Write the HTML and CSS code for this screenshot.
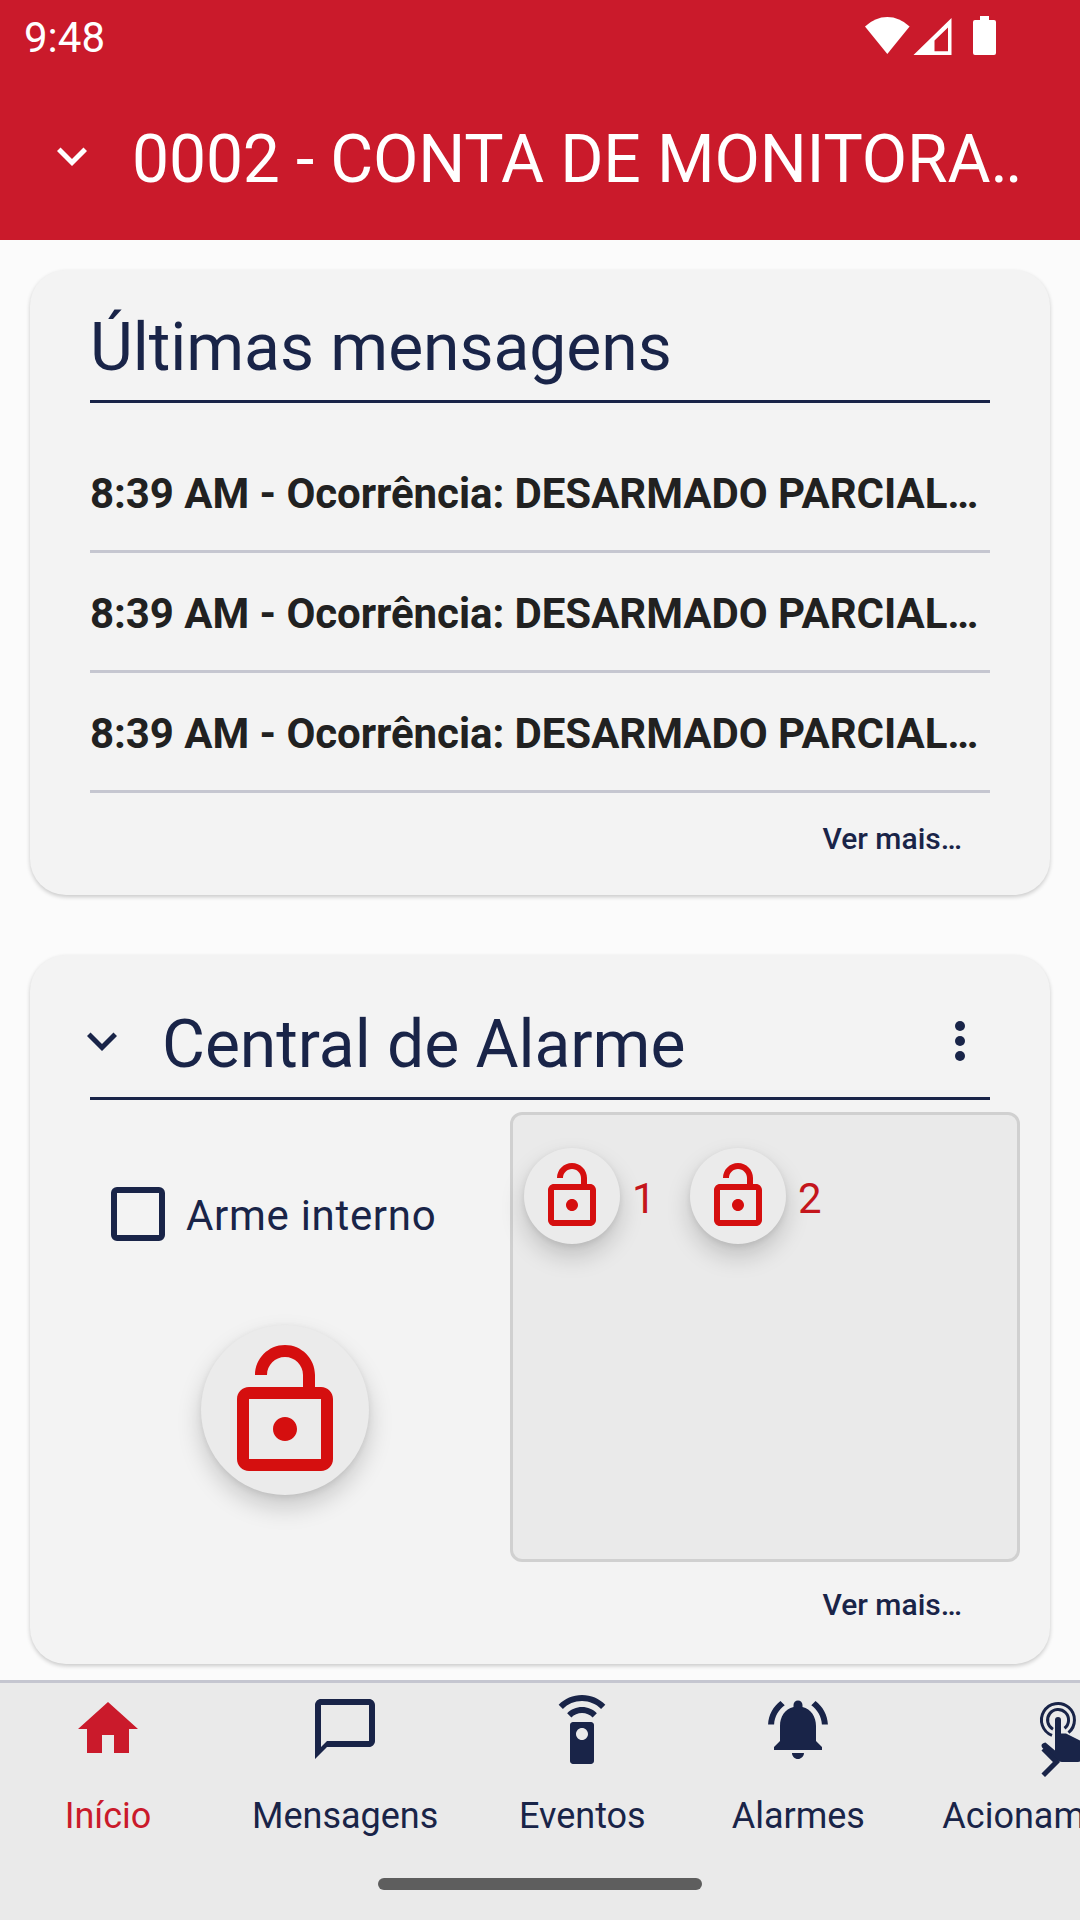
FILE: index.html
```html
<!DOCTYPE html>
<html lang="pt-BR">
<head>
    <meta charset="UTF-8">
    <title>Início</title>
    <link rel="stylesheet" href="styles.css">
</head>
<body>
    <header class="header">
        <div class="status-bar">
            <span class="clock">9:48</span>
            <svg class="status-icons" viewBox="0 0 132 40" fill="currentColor">
                <path d="M0 10.5Q10 1 22.3 1T44.6 10.5L22.3 38Z"/>
                <path fill-rule="evenodd" d="M86.500 2V39H48.500ZM83 11.500L69.500 24.500V35.300H83Z"/>
                <path d="M115 0h9v4h5q2 0 2 2v31q0 2-2 2h-19q-2 0-2-2v-31q0-2 2-2h5z"/>
            </svg>
        </div>
        <div class="toolbar">
            <svg class="icon-sm" viewBox="0 0 24 24" fill="currentColor"><path d="M7.410 8.590L12 13.170l4.590-4.580L18 10l-6 6-6-6z"/></svg>
            <h1 class="title">0002 - CONTA DE MONITORA<span class="dots">..</span></h1>
        </div>
    </header>

    <main class="content">
        <section class="card messages">
            <h2 class="card-title">Últimas mensagens</h2>
            <ul class="message-list">
                <li>8:39 AM - Ocorrência: DESARMADO PARCIAL…</li>
                <li>8:39 AM - Ocorrência: DESARMADO PARCIAL…</li>
                <li>8:39 AM - Ocorrência: DESARMADO PARCIAL…</li>
            </ul>
            <a class="more">Ver mais…</a>
        </section>

        <section class="card alarm">
            <div class="alarm-header">
                <svg class="icon-sm" viewBox="0 0 24 24" fill="currentColor"><path d="M7.410 8.590L12 13.170l4.590-4.580L18 10l-6 6-6-6z"/></svg>
                <h2 class="alarm-title">Central de Alarme</h2>
                <svg class="icon-sm" viewBox="0 0 24 24" fill="currentColor"><circle cx="12" cy="6" r="2"/><circle cx="12" cy="12" r="2"/><circle cx="12" cy="18" r="2"/></svg>
            </div>
            <div class="alarm-body">
                <div class="arm">
                    <label class="check"><span class="box"></span><span class="check-text">Arme interno</span></label>
                    <button class="lock lock-big">
                        <svg viewBox="0 0 24 24" fill="currentColor"><path d="M12 17c1.100 0 2-.9 2-2s-.9-2-2-2-2 .9-2 2 .9 2 2 2zm6-9h-1V6c0-2.760-2.240-5-5-5S7 3.240 7 6h2c0-1.660 1.340-3 3-3s3 1.340 3 3v2H6c-1.100 0-2 .9-2 2v10c0 1.100.9 2 2 2h12c1.100 0 2-.9 2-2V10c0-1.100-.9-2-2-2zm0 12H6V10h12v10z"/></svg>
                    </button>
                </div>
                <div class="zones">
                    <div class="zone">
                        <button class="lock">
                            <svg viewBox="0 0 24 24" fill="currentColor"><path d="M12 17c1.100 0 2-.9 2-2s-.9-2-2-2-2 .9-2 2 .9 2 2 2zm6-9h-1V6c0-2.760-2.240-5-5-5S7 3.240 7 6h2c0-1.660 1.340-3 3-3s3 1.340 3 3v2H6c-1.100 0-2 .9-2 2v10c0 1.100.9 2 2 2h12c1.100 0 2-.9 2-2V10c0-1.100-.9-2-2-2zm0 12H6V10h12v10z"/></svg>
                        </button>
                        <span>1</span>
                    </div>
                    <div class="zone">
                        <button class="lock">
                            <svg viewBox="0 0 24 24" fill="currentColor"><path d="M12 17c1.100 0 2-.9 2-2s-.9-2-2-2-2 .9-2 2 .9 2 2 2zm6-9h-1V6c0-2.760-2.240-5-5-5S7 3.240 7 6h2c0-1.660 1.340-3 3-3s3 1.340 3 3v2H6c-1.100 0-2 .9-2 2v10c0 1.100.9 2 2 2h12c1.100 0 2-.9 2-2V10c0-1.100-.9-2-2-2zm0 12H6V10h12v10z"/></svg>
                        </button>
                        <span>2</span>
                    </div>
                </div>
            </div>
            <a class="more">Ver mais…</a>
        </section>
    </main>

    <nav class="nav">
        <div class="tabs">
            <a class="tab active">
                <svg viewBox="0 0 24 24" fill="currentColor"><path d="M10 20v-6h4v6h5v-8h3L12 3 2 12h3v8z"/></svg>
                <span>Início</span>
            </a>
            <a class="tab">
                <svg viewBox="0 0 24 24" fill="currentColor"><path d="M20 2H4c-1.100 0-2 .9-2 2v18l4-4h14c1.100 0 2-.9 2-2V4c0-1.100-.9-2-2-2zm0 14H6l-2 2V4h16v12z"/></svg>
                <span>Mensagens</span>
            </a>
            <a class="tab">
                <svg class="remote" viewBox="0 0 24 24" fill="currentColor"><path d="M15 9H9c-.55 0-1 .45-1 1v12c0 .55.45 1 1 1h6c.55 0 1-.45 1-1V10c0-.55-.45-1-1-1zm-3 6c-1.100 0-2-.9-2-2s.9-2 2-2 2 .9 2 2-.9 2-2 2zM7.050 6.050l1.410 1.410C9.370 6.560 10.620 6 12 6s2.630.56 3.540 1.460l1.410-1.410C15.680 4.780 13.930 4 12 4s-3.680.78-4.950 2.050zM12 0C8.960 0 6.210 1.230 4.220 3.220l1.410 1.410C7.260 3.010 9.510 2 12 2s4.740 1.010 6.360 2.640l1.410-1.410C17.790 1.230 15.040 0 12 0z"/></svg>
                <span>Eventos</span>
            </a>
            <a class="tab">
                <svg viewBox="0 0 24 24" fill="currentColor"><path d="M7.580 4.080L6.150 2.650C3.750 4.480 2.170 7.300 2.030 10.500h2c.15-2.650 1.510-4.970 3.550-6.420zm12.390 6.420h2c-.15-3.200-1.730-6.020-4.120-7.850l-1.420 1.430c2.020 1.450 3.390 3.770 3.540 6.420zM18 11c0-3.070-1.640-5.640-4.500-6.320V4c0-.83-.67-1.500-1.500-1.500s-1.500.67-1.500 1.500v.68C7.630 5.360 6 7.920 6 11v5l-2 2v1h16v-1l-2-2v-5zm-6 11c.14 0 .27-.01.4-.04.65-.14 1.180-.58 1.440-1.180.1-.24.15-.5.15-.78h-4c.01 1.100.9 2 2.010 2z"/></svg>
                <span>Alarmes</span>
            </a>
            <a class="tab">
                <svg viewBox="0 0 72 72" fill="currentColor">
                    <g fill="none" stroke="currentColor" stroke-width="3">
                        <path d="M30 42.400A16.500 16.500 0 1 1 46.500 39.700"/>
                        <path d="M31 36.200A10.500 10.500 0 1 1 42.500 35.300"/>
                    </g>
                    <path d="M33 27a3 3 0 0 1 6 0v13.500h5l15 7.500q3.500 1.500 3 5l-2 12q-.5 4-4 4H40q-3 0-5-2L20.500 55q-3-4 3-5.500l9.500 8z"/>
                </svg>
                <span>Acionamentos</span>
            </a>
        </div>
        <svg class="scroll-hint" viewBox="0 0 24 24" fill="currentColor"><path d="M10 6L8.590 7.410 13.170 12l-4.580 4.590L10 18l6-6z"/></svg>
        <div class="home-pill"></div>
    </nav>
</body>
</html>
```
FILE: styles.css
```css
* {
    box-sizing: border-box;
}

body {
    margin: 0;
    height: 1920px;
    display: flex;
    flex-direction: column;
    overflow: hidden;
    background-color: #fbfbfb;
    color: #192448;
    font-family: Roboto, sans-serif;
    font-size: 42px;
}

h1, h2, ul {
    margin: 0;
    padding: 0;
    font-weight: 400;
}

svg {
    display: block;
    flex-shrink: 0;
}

.header {
    height: 240px;
    background-color: #ca1a2b;
    color: white;
}

.status-bar {
    height: 72px;
    display: flex;
    align-items: flex-start;
    justify-content: space-between;
    padding: 16px 83px 0 24px;
}

.clock {
    line-height: 43px;
}

.status-icons {
    width: 132px;
    height: 40px;
}

.toolbar {
    height: 168px;
    display: flex;
    align-items: center;
    padding: 0 42px;
}

.icon-sm {
    width: 60px;
    height: 60px;
}

.title {
    margin-left: 30px;
    font-size: 66px;
    line-height: 84px;
    padding-top: 8px;
    letter-spacing: -0.15px;
    white-space: nowrap;
}

.dots {
    letter-spacing: -2.5px;
}

.content {
    height: 1440px;
    padding: 30px 30px 0;
}

.card {
    background-color: #f3f3f3;
    border-radius: 36px;
    box-shadow: 0 2px 4px rgba(0, 0, 0, 0.2);
    display: flex;
    flex-direction: column;
}

.messages {
    height: 625px;
    padding: 36px 60px 0;
}

.card-title {
    height: 97px;
    border-bottom: 3px solid #192448;
    font-size: 66px;
    line-height: 84px;
    letter-spacing: -0.05px;
}

.message-list {
    padding-top: 30px;
    list-style: none;
    color: #212121;
    font-weight: 700;
    letter-spacing: -0.06px;
}

.message-list li {
    height: 120px;
    line-height: 122px;
    border-bottom: 3px solid #c5c6d0;
    white-space: nowrap;
}

.more {
    align-self: flex-end;
    margin: 28px 28px 0 0;
    font-size: 30px;
    font-weight: 500;
    line-height: 36px;
}

.alarm {
    height: 709px;
    margin-top: 60px;
    padding: 49px 30px 0;
}

.alarm-header {
    height: 96px;
    margin: 0 30px;
    display: flex;
    align-items: flex-start;
    border-bottom: 3px solid #192448;
}

.alarm-header .icon-sm {
    margin-top: 7px;
}

.alarm-header .icon-sm:first-child {
    margin-left: -18px;
}

.alarm-title {
    flex: 1;
    margin-left: 30px;
    font-size: 66px;
    line-height: 82px;
    letter-spacing: -0.05px;
}

.alarm-body {
    height: 462px;
    padding-top: 12px;
    display: flex;
}

.arm {
    width: 450px;
    padding-top: 75px;
}

.check {
    display: flex;
    align-items: center;
    height: 54px;
    padding-left: 51px;
    letter-spacing: 0.7px;
}

.check-text {
    padding-top: 2px;
}

.box {
    width: 54px;
    height: 54px;
    margin-right: 21px;
    border: 6px solid #192448;
    border-radius: 6px;
}

.lock {
    width: 96px;
    height: 96px;
    padding: 0;
    display: flex;
    align-items: center;
    justify-content: center;
    border: none;
    border-radius: 50%;
    background-color: #ebebeb;
    color: #d50f0f;
    box-shadow: 0 12px 24px rgba(0, 0, 0, 0.18), 0 2px 6px rgba(0, 0, 0, 0.08);
}

.lock svg {
    width: 72px;
    height: 72px;
}

.lock-big {
    width: 168px;
    height: 170px;
    margin: 84px 0 0 141px;
    padding-top: 2px;
}

.lock-big svg {
    width: 144px;
    height: 144px;
}

.zones {
    width: 510px;
    height: 450px;
    padding: 33px 11px;
    display: flex;
    border: 3px solid #d0d0d0;
    border-radius: 12px;
    background-color: #eaeaea;
}

.zone {
    width: 166px;
    height: 96px;
    display: flex;
    align-items: center;
    gap: 12px;
    color: #c4161c;
}

.zone span {
    padding-top: 4px;
}

.alarm .more {
    margin: 25px 28px 0 0;
    padding-right: 30px;
}

.nav {
    position: relative;
    height: 240px;
    overflow: hidden;
    border-top: 3px solid #c5c6d0;
    background-color: #eaeaea;
}

.tabs {
    display: flex;
    gap: 72px;
    width: max-content;
    padding: 10px 0 0 36px;
}

.tab {
    min-width: 144px;
    display: flex;
    flex-direction: column;
    align-items: center;
    font-size: 36px;
}

.tab svg {
    width: 72px;
    height: 72px;
}

.tab .remote {
    margin: 2px 0 -2px;
}

.tab span {
    margin-top: 30px;
    line-height: 42px;
}

.active {
    color: #ca1a2b;
}

.scroll-hint {
    position: absolute;
    top: 49px;
    right: 0;
    width: 60px;
    height: 60px;
}

.home-pill {
    width: 324px;
    height: 12px;
    margin: 41px auto 0;
    border-radius: 6px;
    background-color: #5e5e5e;
}
```
